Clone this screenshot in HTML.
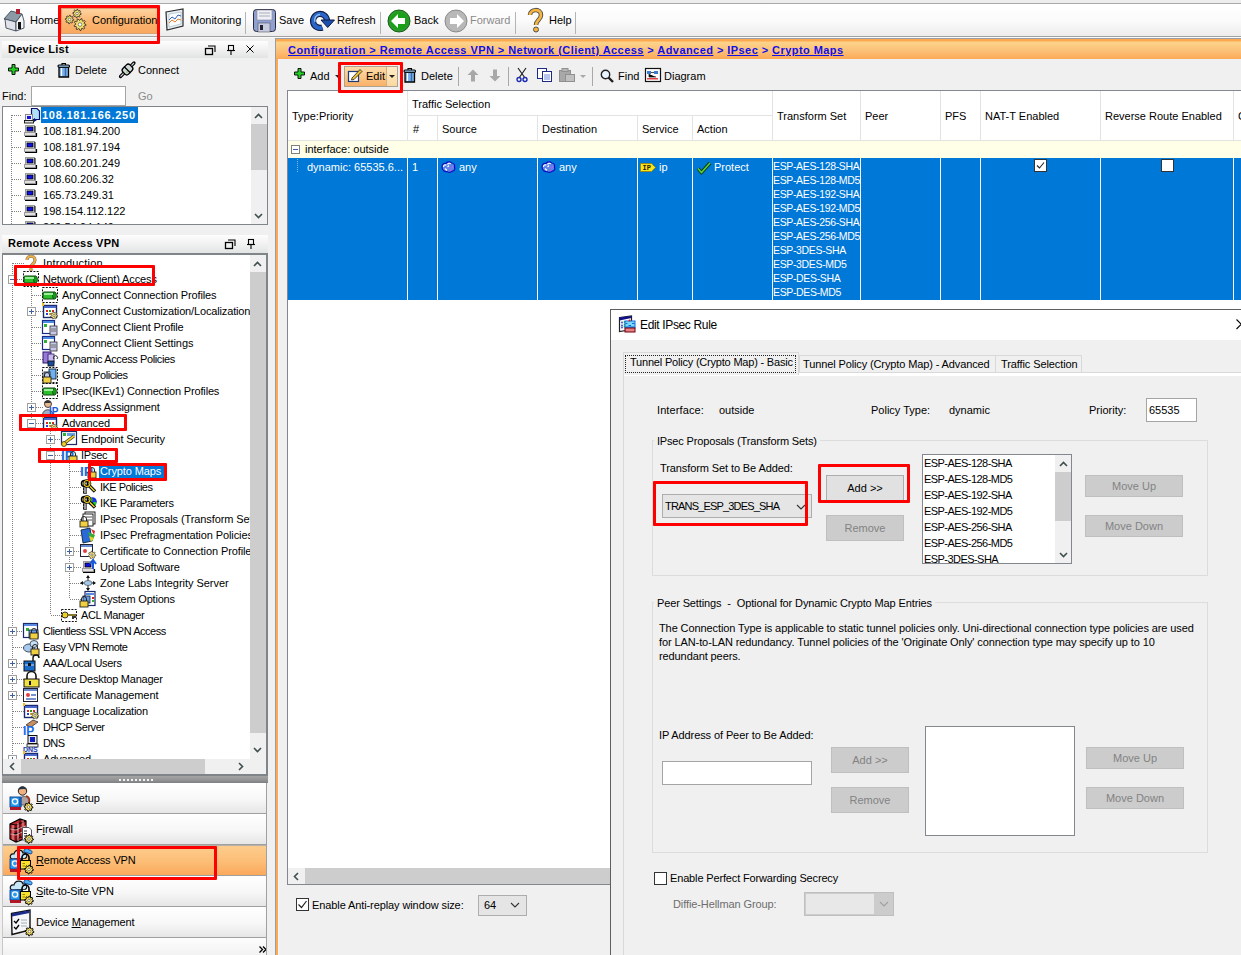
<!DOCTYPE html>
<html><head><meta charset="utf-8">
<style>
*{box-sizing:border-box}
html,body{margin:0;padding:0}
body{width:1241px;height:955px;overflow:hidden;position:relative;background:#f0f0f0;font-family:"Liberation Sans",sans-serif;font-size:11px;color:#000}
.a{position:absolute}
.t{position:absolute;white-space:nowrap;line-height:13px}
.red{position:absolute;border:3px solid #f00;border-radius:1px;z-index:50}
.sep{position:absolute;width:1px;background:#a8a8a8}
.btn{position:absolute;background:#cccccc;border:1px solid #bcbcbc;color:#838383;text-align:center;white-space:nowrap}
.navb{position:absolute;left:3px;width:264px;height:31px;background:linear-gradient(#fefefe,#f6f6f6 60%,#e9e9e9);border-bottom:1px solid #a0a0a0}
.tree{position:absolute;white-space:nowrap;line-height:16px;height:16px}
.dotv{position:absolute;width:1px;background:repeating-linear-gradient(#808080 0 1px,transparent 1px 2px)}
.doth{position:absolute;height:1px;background:repeating-linear-gradient(90deg,#808080 0 1px,transparent 1px 2px)}
.exp{position:absolute;width:9px;height:9px;border:1px solid #a0a0a0;background:#fff}
.exp:before{content:"";position:absolute;left:1px;top:3px;width:5px;height:1px;background:#4060a0}
.exp.p:after{content:"";position:absolute;left:3px;top:1px;width:1px;height:5px;background:#4060a0}
svg{position:absolute;overflow:visible}
</style></head><body>
<div class="a" style="left:0px;top:0px;width:1241px;height:3px;background:#ededed"></div>
<div class="a" style="left:0px;top:3px;width:1241px;height:1px;background:#a9a9a9"></div>
<div class="a" style="left:0px;top:4px;width:1241px;height:32px;background:linear-gradient(#ffffff,#fbfbfb 50%,#ececec)"></div>
<div class="a" style="left:0px;top:36px;width:1241px;height:1px;background:#a0a0a0"></div>
<div class="a" style="left:0px;top:37px;width:1241px;height:1px;background:#fafafa"></div>
<div class="a" style="left:61px;top:8px;width:97px;height:26px;background:linear-gradient(#fdd3a0,#fbb46f 55%,#f9a860);border:1px solid #d9a070"></div>
<div class="t" style="left:30px;top:14px;color:#000">Home</div>
<div class="t" style="left:92px;top:14px;color:#000">Configuration</div>
<div class="t" style="left:190px;top:14px;color:#000">Monitoring</div>
<div class="t" style="left:279px;top:14px;color:#000">Save</div>
<div class="t" style="left:337px;top:14px;color:#000">Refresh</div>
<div class="t" style="left:414px;top:14px;color:#000">Back</div>
<div class="t" style="left:470px;top:14px;color:#8a8a8a">Forward</div>
<div class="t" style="left:549px;top:14px;color:#000">Help</div>
<div class="a" style="left:245px;top:12px;width:1px;height:22px;background:#b4b4b4"></div>
<div class="a" style="left:380px;top:12px;width:1px;height:22px;background:#b4b4b4"></div>
<div class="a" style="left:515px;top:12px;width:1px;height:22px;background:#b4b4b4"></div>
<div class="a" style="left:575px;top:12px;width:1px;height:22px;background:#b4b4b4"></div>
<svg style="left:2px;top:9px;" width="23" height="23" viewBox="0 0 23 23"><polygon points="2,10 9,2 20,5 14,13" fill="#8c9aa6" stroke="#3c4a58" stroke-width="0.9"/><polygon points="3,10 14,13 14,22 4,19" fill="#e2e2ea" stroke="#3c4a58" stroke-width="0.9"/><polygon points="14,13 20,5 22,12 22,19 14,22" fill="#f4f4f4" stroke="#3c4a58" stroke-width="0.9"/><rect x="16" y="13" width="3" height="7" fill="#111"/><rect x="14" y="0" width="4" height="5" fill="#b02030"/></svg>
<svg style="left:64px;top:8px;" width="25" height="25" viewBox="0 0 25 25"><polygon points="17.20,5.50 17.12,6.32 15.79,6.66 15.51,7.18 15.97,8.47 15.33,8.99 14.16,8.29 13.59,8.47 13.00,9.70 12.18,9.62 11.84,8.29 11.32,8.01 10.03,8.47 9.51,7.83 10.21,6.66 10.03,6.09 8.80,5.50 8.88,4.68 10.21,4.34 10.49,3.82 10.03,2.53 10.67,2.01 11.84,2.71 12.41,2.53 13.00,1.30 13.82,1.38 14.16,2.71 14.68,2.99 15.97,2.53 16.49,3.17 15.79,4.34 15.97,4.91" fill="#f4e070" stroke="#222" stroke-width="0.8"/><circle cx="13" cy="5.5" r="1.26" fill="#fff" stroke="#444" stroke-width="0.6"/><polygon points="9.70,11.50 9.62,12.32 8.29,12.66 8.01,13.18 8.47,14.47 7.83,14.99 6.66,14.29 6.09,14.47 5.50,15.70 4.68,15.62 4.34,14.29 3.82,14.01 2.53,14.47 2.01,13.83 2.71,12.66 2.53,12.09 1.30,11.50 1.38,10.68 2.71,10.34 2.99,9.82 2.53,8.53 3.17,8.01 4.34,8.71 4.91,8.53 5.50,7.30 6.32,7.38 6.66,8.71 7.18,8.99 8.47,8.53 8.99,9.17 8.29,10.34 8.47,10.91" fill="#f4e070" stroke="#222" stroke-width="0.8"/><circle cx="5.5" cy="11.5" r="1.26" fill="#fff" stroke="#444" stroke-width="0.6"/><polygon points="22.00,16.50 21.91,17.54 20.06,17.98 19.74,18.66 20.60,20.36 19.86,21.10 18.16,20.24 17.48,20.56 17.04,22.41 16.00,22.50 15.25,20.75 14.52,20.56 13.00,21.70 12.14,21.10 12.69,19.28 12.26,18.66 10.36,18.55 10.09,17.54 11.68,16.50 11.75,15.75 10.36,14.45 10.80,13.50 12.69,13.72 13.22,13.19 13.00,11.30 13.95,10.86 15.25,12.25 16.00,12.18 17.04,10.59 18.05,10.86 18.16,12.76 18.78,13.19 20.60,12.64 21.20,13.50 20.06,15.02 20.25,15.75" fill="#f4e070" stroke="#222" stroke-width="0.8"/><circle cx="16" cy="16.5" r="1.80" fill="#fff" stroke="#444" stroke-width="0.6"/></svg>
<svg style="left:165px;top:8px;" width="21" height="24" viewBox="0 0 21 24"><polygon points="1,4 18,1 18,18 2,22" fill="#e8eef5" stroke="#2a2a2a" stroke-width="1.2"/><polygon points="4,6 16,4 16,16 4,19" fill="#fafcff" stroke="#8aa" stroke-width="0.5"/><polyline points="4,12 7,9 10,11 13,7 16,8" fill="none" stroke="#3060c0" stroke-width="1"/><polyline points="4,15 7,12 10,14 13,11 16,12" fill="none" stroke="#f08020" stroke-width="1"/></svg>
<svg style="left:253px;top:9px;" width="23" height="23" viewBox="0 0 23 23"><rect x="0.5" y="0.5" width="22" height="22" rx="3" fill="#8f9fcf" stroke="#2a2a3a" stroke-width="1"/><rect x="4" y="1" width="15" height="10" fill="#eef0f6" stroke="#889" stroke-width="0.6"/><line x1="6" y1="4" x2="17" y2="4" stroke="#99a" stroke-width="0.8"/><line x1="6" y1="7" x2="17" y2="7" stroke="#99a" stroke-width="0.8"/><rect x="5" y="14" width="12" height="9" fill="#c8cce0" stroke="#556" stroke-width="0.6"/><rect x="7" y="16" width="3" height="5" fill="#223"/></svg>
<svg style="left:311px;top:9px;" width="24" height="23" viewBox="0 0 24 23"><path d="M11.4,18.5 A7,7 0 1 1 16,11.4" fill="none" stroke="#101a40" stroke-width="6.2"/><path d="M11.4,18.5 A7,7 0 1 1 16,11.4" fill="none" stroke="#2a66c8" stroke-width="4"/><path d="M4,13 A5.5,5.5 0 0 1 9,5.5" fill="none" stroke="#8ac0f0" stroke-width="1.5"/><polygon points="10,11 23.5,11 16.7,18.5" fill="#1a50b0" stroke="#101a40" stroke-width="1"/></svg>
<svg style="left:387px;top:9px;" width="24" height="24" viewBox="0 0 24 24"><circle cx="12" cy="12" r="11" fill="#2a9a2a" stroke="#1a5e1a" stroke-width="1"/><circle cx="12" cy="12" r="8.5" fill="#18a018"/><polygon points="4,12 11,5 11,9 18,9 18,15 11,15 11,19" fill="#fff"/></svg>
<svg style="left:444px;top:9px;" width="24" height="24" viewBox="0 0 24 24"><circle cx="12" cy="12" r="11" fill="#b8b8b8" stroke="#8a8a8a" stroke-width="1"/><polygon points="20,12 13,5 13,9 6,9 6,15 13,15 13,19" fill="#fff"/></svg>
<svg style="left:527px;top:8px;" width="17" height="25" viewBox="0 0 17 25"><path d="M3,7 C3,1 14,0 14,7 C14,12 9,12 9,17" fill="none" stroke="#444" stroke-width="4.5"/><path d="M3,7 C3,1 14,0 14,7 C14,12 9,12 9,17" fill="none" stroke="#f5b540" stroke-width="2.8"/><circle cx="9" cy="21.5" r="2.5" fill="#f5b540" stroke="#444" stroke-width="0.9"/></svg>
<div class="red" style="left:58px;top:5px;width:102px;height:39px"></div>
<div class="a" style="left:2px;top:41px;width:266px;height:17px;background:linear-gradient(#fdfdfd,#f4f4f4 40%,#e2e4e4)"></div>
<div class="t" style="left:8px;top:43px;font-weight:bold;letter-spacing:0.25px">Device List</div>
<svg style="left:205px;top:45px;" width="11" height="10" viewBox="0 0 11 10"><rect x="0.5" y="3.5" width="7" height="6" fill="none" stroke="#000" stroke-width="1.3"/><path d="M3,1 H10 V7" fill="none" stroke="#000" stroke-width="1.1"/></svg>
<svg style="left:227px;top:45px;" width="8" height="10" viewBox="0 0 8 10"><rect x="1.5" y="0.5" width="5" height="5" fill="none" stroke="#000" stroke-width="1.1"/><line x1="0" y1="5.5" x2="8" y2="5.5" stroke="#000" stroke-width="1.1"/><line x1="4" y1="5" x2="4" y2="10" stroke="#000" stroke-width="1.1"/></svg>
<svg style="left:246px;top:45px;" width="8" height="8" viewBox="0 0 8 8"><path d="M0.5,0.5 L7.5,7.5 M7.5,0.5 L0.5,7.5" stroke="#000" stroke-width="1"/></svg>
<svg style="left:8px;top:64px;" width="11" height="11" viewBox="0 0 11 11"><path d="M4,0.5 h3 v3.5 h3.5 v3 h-3.5 v3.5 h-3 v-3.5 h-3.5 v-3 h3.5z" fill="#22cc22" stroke="#111" stroke-width="1"/></svg>
<div class="t" style="left:25px;top:64px;">Add</div>
<svg style="left:57px;top:62px;" width="13" height="15" viewBox="0 0 13 15"><path d="M2,5 V15 H11.5 V5z" fill="#7ab0e8" stroke="#000" stroke-width="1.3"/><path d="M4.5,6 V14" stroke="#fff" stroke-width="1.2"/><path d="M8.5,6 V14" stroke="#3a6ab0" stroke-width="1.4"/><rect x="1" y="3" width="11.5" height="2.2" rx="1" fill="#9ac8f0" stroke="#000" stroke-width="1.1"/><path d="M5,3 V1.5 H8.5 V3" fill="none" stroke="#000" stroke-width="1.1"/></svg>
<div class="t" style="left:75px;top:64px;">Delete</div>
<svg style="left:119px;top:62px;" width="17" height="17" viewBox="0 0 17 17"><path d="M1.5,14.5 L5,11 M12,4 L15,1" stroke="#000" stroke-width="3.2" stroke-linecap="round"/><path d="M1.5,14.5 L5,11 M12,4 L15,1" stroke="#c8d0d0" stroke-width="1.1"/><rect x="3.5" y="3.5" width="10" height="8" rx="2.5" transform="rotate(-45 8.5 7.5)" fill="#d0d8d8" stroke="#000" stroke-width="1.3"/><path d="M5,4.5 L11.5,11" stroke="#000" stroke-width="1.2"/><circle cx="8" cy="10" r="0.8" fill="#60c040"/></svg>
<div class="t" style="left:138px;top:64px;">Connect</div>
<div class="t" style="left:2px;top:90px;">Find:</div>
<div class="a" style="left:31px;top:86px;width:95px;height:20px;background:#fff;border:1px solid #a5a5a5"></div>
<div class="t" style="left:138px;top:90px;color:#8a8a8a">Go</div>
<div class="a" style="left:2px;top:106px;width:266px;height:119px;background:#fff;border:1px solid #7f8588"></div>
<div class="a" style="left:3px;top:107px;width:248px;height:117px;overflow:hidden">
<div class="dotv" style="left:8px;top:8px;height:109px"></div>
<div class="doth" style="left:9px;top:8px;width:10px"></div>
<div class="a" style="left:38px;top:0px;width:97px;height:16px;background:#0078d7"></div>
<svg style="left:19px;top:0px;" width="18" height="17" viewBox="0 0 18 17"><path d="M9.5,1.5 H15 L17.5,4 V12.5 H9.5z" fill="#b0e0f8" stroke="#10106a" stroke-width="1.2"/><path d="M12,11 L15,13 L12,15z" fill="#10106a"/><rect x="3.5" y="7.5" width="7" height="6" fill="#f0f0f0" stroke="#888" stroke-width="1"/><rect x="5" y="9" width="4" height="3" fill="#1010e0"/><rect x="2.5" y="13.5" width="9" height="2.5" fill="#e0e0e0" stroke="#111" stroke-width="0.9"/></svg>
<div class="t" style="left:39px;top:2px;color:#fff;font-weight:bold;letter-spacing:0.75px">108.181.166.250</div>
<div class="doth" style="left:9px;top:24px;width:10px"></div>
<svg style="left:19px;top:16px;" width="16" height="16" viewBox="0 0 16 16"><rect x="3.5" y="2.5" width="9" height="7" fill="#f0f0f0" stroke="#9a9a9a" stroke-width="1"/><path d="M13,3 V10" stroke="#000" stroke-width="1"/><rect x="5" y="4" width="6" height="4" fill="#1010e0" stroke="#000" stroke-width="0.8"/><rect x="2.5" y="9.5" width="11" height="3" fill="#e0e0e0" stroke="#9a9a9a" stroke-width="1"/><path d="M3,13.5 H14.5 V10" stroke="#000" stroke-width="1.2" fill="none"/></svg>
<div class="t" style="left:40px;top:18px;letter-spacing:0.05px">108.181.94.200</div>
<div class="doth" style="left:9px;top:40px;width:10px"></div>
<svg style="left:19px;top:32px;" width="16" height="16" viewBox="0 0 16 16"><rect x="3.5" y="2.5" width="9" height="7" fill="#f0f0f0" stroke="#9a9a9a" stroke-width="1"/><path d="M13,3 V10" stroke="#000" stroke-width="1"/><rect x="5" y="4" width="6" height="4" fill="#1010e0" stroke="#000" stroke-width="0.8"/><rect x="2.5" y="9.5" width="11" height="3" fill="#e0e0e0" stroke="#9a9a9a" stroke-width="1"/><path d="M3,13.5 H14.5 V10" stroke="#000" stroke-width="1.2" fill="none"/></svg>
<div class="t" style="left:40px;top:34px;letter-spacing:0.05px">108.181.97.194</div>
<div class="doth" style="left:9px;top:56px;width:10px"></div>
<svg style="left:19px;top:48px;" width="16" height="16" viewBox="0 0 16 16"><rect x="3.5" y="2.5" width="9" height="7" fill="#f0f0f0" stroke="#9a9a9a" stroke-width="1"/><path d="M13,3 V10" stroke="#000" stroke-width="1"/><rect x="5" y="4" width="6" height="4" fill="#1010e0" stroke="#000" stroke-width="0.8"/><rect x="2.5" y="9.5" width="11" height="3" fill="#e0e0e0" stroke="#9a9a9a" stroke-width="1"/><path d="M3,13.5 H14.5 V10" stroke="#000" stroke-width="1.2" fill="none"/></svg>
<div class="t" style="left:40px;top:50px;letter-spacing:0.05px">108.60.201.249</div>
<div class="doth" style="left:9px;top:72px;width:10px"></div>
<svg style="left:19px;top:64px;" width="16" height="16" viewBox="0 0 16 16"><rect x="3.5" y="2.5" width="9" height="7" fill="#f0f0f0" stroke="#9a9a9a" stroke-width="1"/><path d="M13,3 V10" stroke="#000" stroke-width="1"/><rect x="5" y="4" width="6" height="4" fill="#1010e0" stroke="#000" stroke-width="0.8"/><rect x="2.5" y="9.5" width="11" height="3" fill="#e0e0e0" stroke="#9a9a9a" stroke-width="1"/><path d="M3,13.5 H14.5 V10" stroke="#000" stroke-width="1.2" fill="none"/></svg>
<div class="t" style="left:40px;top:66px;letter-spacing:0.05px">108.60.206.32</div>
<div class="doth" style="left:9px;top:88px;width:10px"></div>
<svg style="left:19px;top:80px;" width="16" height="16" viewBox="0 0 16 16"><rect x="3.5" y="2.5" width="9" height="7" fill="#f0f0f0" stroke="#9a9a9a" stroke-width="1"/><path d="M13,3 V10" stroke="#000" stroke-width="1"/><rect x="5" y="4" width="6" height="4" fill="#1010e0" stroke="#000" stroke-width="0.8"/><rect x="2.5" y="9.5" width="11" height="3" fill="#e0e0e0" stroke="#9a9a9a" stroke-width="1"/><path d="M3,13.5 H14.5 V10" stroke="#000" stroke-width="1.2" fill="none"/></svg>
<div class="t" style="left:40px;top:82px;letter-spacing:0.05px">165.73.249.31</div>
<div class="doth" style="left:9px;top:104px;width:10px"></div>
<svg style="left:19px;top:96px;" width="16" height="16" viewBox="0 0 16 16"><rect x="3.5" y="2.5" width="9" height="7" fill="#f0f0f0" stroke="#9a9a9a" stroke-width="1"/><path d="M13,3 V10" stroke="#000" stroke-width="1"/><rect x="5" y="4" width="6" height="4" fill="#1010e0" stroke="#000" stroke-width="0.8"/><rect x="2.5" y="9.5" width="11" height="3" fill="#e0e0e0" stroke="#9a9a9a" stroke-width="1"/><path d="M3,13.5 H14.5 V10" stroke="#000" stroke-width="1.2" fill="none"/></svg>
<div class="t" style="left:40px;top:98px;letter-spacing:0.05px">198.154.112.122</div>
<div class="doth" style="left:9px;top:120px;width:10px"></div>
<svg style="left:19px;top:112px;" width="16" height="16" viewBox="0 0 16 16"><rect x="3.5" y="2.5" width="9" height="7" fill="#f0f0f0" stroke="#9a9a9a" stroke-width="1"/><path d="M13,3 V10" stroke="#000" stroke-width="1"/><rect x="5" y="4" width="6" height="4" fill="#1010e0" stroke="#000" stroke-width="0.8"/><rect x="2.5" y="9.5" width="11" height="3" fill="#e0e0e0" stroke="#9a9a9a" stroke-width="1"/><path d="M3,13.5 H14.5 V10" stroke="#000" stroke-width="1.2" fill="none"/></svg>
<div class="t" style="left:40px;top:114px;letter-spacing:0.05px">209.54.94.149</div>
</div>
<div class="a" style="left:251px;top:107px;width:16px;height:117px;background:#f0f0f0"></div>
<div class="a" style="left:251px;top:124px;width:16px;height:46px;background:#cdcdcd"></div>
<svg style="left:254px;top:113px;" width="9" height="6" viewBox="0 0 9 6"><path d="M1,5 L4.5,1.5 L8,5" fill="none" stroke="#3f4f4f" stroke-width="1.6"/></svg>
<svg style="left:254px;top:213px;" width="9" height="6" viewBox="0 0 9 6"><path d="M1,1 L4.5,4.5 L8,1" fill="none" stroke="#3f4f4f" stroke-width="1.6"/></svg>
<div class="a" style="left:2px;top:235px;width:266px;height:18px;background:linear-gradient(#fdfdfd,#f4f4f4 40%,#e2e4e4)"></div>
<div class="t" style="left:8px;top:237px;font-weight:bold;letter-spacing:0.25px">Remote Access VPN</div>
<svg style="left:225px;top:239px;" width="11" height="10" viewBox="0 0 11 10"><rect x="0.5" y="3.5" width="7" height="6" fill="none" stroke="#000" stroke-width="1.3"/><path d="M3,1 H10 V7" fill="none" stroke="#000" stroke-width="1.1"/></svg>
<svg style="left:247px;top:239px;" width="8" height="10" viewBox="0 0 8 10"><rect x="1.5" y="0.5" width="5" height="5" fill="none" stroke="#000" stroke-width="1.1"/><line x1="0" y1="5.5" x2="8" y2="5.5" stroke="#000" stroke-width="1.1"/><line x1="4" y1="5" x2="4" y2="10" stroke="#000" stroke-width="1.1"/></svg>
<div class="a" style="left:2px;top:253px;width:266px;height:523px;background:#fff;border:1px solid #7f8588;border-top:2px solid #7f8588;border-right:2px solid #7f8588;border-bottom:2px solid #7f8588"></div>
<div class="a" style="left:3px;top:255px;width:247px;height:504px;overflow:hidden">
<div class="dotv" style="left:9px;top:8px;height:496px"></div>
<div class="dotv" style="left:28px;top:32px;height:136px"></div>
<div class="dotv" style="left:47px;top:176px;height:184px"></div>
<div class="dotv" style="left:66px;top:208px;height:136px"></div>
<div class="doth" style="left:10px;top:8px;width:11px"></div>
<svg style="left:20px;top:0px;" width="17" height="17" viewBox="0 0 17 17"><path d="M4,5 C4,0 12,0 12,5 C12,9 8,9 8,12" fill="none" stroke="#777" stroke-width="3.2"/><path d="M4,5 C4,0 12,0 12,5 C12,9 8,9 8,12" fill="none" stroke="#f0b040" stroke-width="2"/><circle cx="8" cy="14.5" r="1.6" fill="#f0b040" stroke="#777" stroke-width="0.6"/></svg>
<div class="t" style="left:40px;top:2px;letter-spacing:0.19px">Introduction</div>
<div class="doth" style="left:10px;top:24px;width:11px"></div>
<div class="exp" style="left:5px;top:20px"></div>
<svg style="left:20px;top:16px;" width="17" height="17" viewBox="0 0 17 17"><rect x="0.5" y="0.5" width="15" height="15" fill="none" stroke="#111" stroke-width="1" stroke-dasharray="2,1.3"/><rect x="1" y="5" width="12" height="7" rx="1" fill="#2cc02c" stroke="#114411" stroke-width="1"/><ellipse cx="12.5" cy="8.5" rx="2" ry="3.5" fill="#1a9a1a" stroke="#114411" stroke-width="0.8"/><rect x="2" y="6" width="9" height="2" fill="#9af09a"/></svg>
<div class="t" style="left:40px;top:18px;letter-spacing:-0.13px">Network (Client) Access</div>
<div class="doth" style="left:29px;top:40px;width:11px"></div>
<svg style="left:39px;top:32px;" width="17" height="17" viewBox="0 0 17 17"><rect x="0.5" y="0.5" width="15" height="15" fill="none" stroke="#111" stroke-width="1" stroke-dasharray="2,1.3"/><rect x="1" y="5" width="12" height="7" rx="1" fill="#2cc02c" stroke="#114411" stroke-width="1"/><ellipse cx="12.5" cy="8.5" rx="2" ry="3.5" fill="#1a9a1a" stroke="#114411" stroke-width="0.8"/><rect x="2" y="6" width="9" height="2" fill="#9af09a"/></svg>
<div class="t" style="left:59px;top:34px;letter-spacing:-0.13px">AnyConnect Connection Profiles</div>
<div class="doth" style="left:29px;top:56px;width:11px"></div>
<div class="exp p" style="left:24px;top:52px"></div>
<svg style="left:39px;top:48px;" width="17" height="17" viewBox="0 0 17 17"><rect x="1.5" y="2.5" width="13" height="12" fill="#fff" stroke="#1a2a6a" stroke-width="1.4"/><rect x="2" y="3" width="12" height="2" fill="#4a6ad0"/><rect x="4" y="7" width="2" height="2" fill="#e02020"/><rect x="7" y="7" width="2" height="2" fill="#20a020"/><rect x="10" y="7" width="2" height="2" fill="#e02020"/><rect x="4" y="10" width="2" height="2" fill="#2040e0"/><rect x="7" y="10" width="2" height="2" fill="#e0a020"/><rect x="0" y="0" width="2" height="3" fill="#f0c020"/><polygon points="15.60,12.50 15.51,13.30 14.34,13.62 14.03,14.12 14.24,15.31 13.56,15.74 12.58,15.03 12.00,15.09 11.20,16.01 10.44,15.74 10.38,14.53 9.97,14.12 8.76,14.06 8.49,13.30 9.41,12.50 9.47,11.92 8.76,10.94 9.19,10.26 10.38,10.47 10.88,10.16 11.20,8.99 12.00,8.90 12.58,9.97 13.12,10.16 14.24,9.69 14.81,10.26 14.34,11.38 14.53,11.92" fill="#f3e27a" stroke="#333" stroke-width="0.7"/><circle cx="12" cy="12.5" r="1.08" fill="#fff" stroke="#444" stroke-width="0.6"/></svg>
<div class="t" style="left:59px;top:50px;letter-spacing:-0.15px">AnyConnect Customization/Localization</div>
<div class="doth" style="left:29px;top:72px;width:11px"></div>
<svg style="left:39px;top:64px;" width="17" height="17" viewBox="0 0 17 17"><rect x="0.5" y="1.5" width="12" height="13" fill="#fff" stroke="#1a2a8a" stroke-width="1.2"/><rect x="1" y="2" width="11" height="2" fill="#4a8ae0"/><rect x="2" y="5" width="3" height="3" fill="#30b030"/><rect x="8" y="7" width="7" height="9" fill="#c8c8e8" stroke="#333" stroke-width="0.8"/><line x1="9" y1="10" x2="14" y2="10" stroke="#555" stroke-width="0.8"/><line x1="9" y1="12" x2="14" y2="12" stroke="#555" stroke-width="0.8"/></svg>
<div class="t" style="left:59px;top:66px;letter-spacing:-0.15px">AnyConnect Client Profile</div>
<div class="doth" style="left:29px;top:88px;width:11px"></div>
<svg style="left:39px;top:80px;" width="17" height="17" viewBox="0 0 17 17"><rect x="0.5" y="1.5" width="12" height="13" fill="#fff" stroke="#1a2a8a" stroke-width="1.2"/><rect x="1" y="2" width="11" height="2" fill="#4a8ae0"/><rect x="2" y="5" width="3" height="3" fill="#30b030"/><rect x="8" y="7" width="7" height="9" fill="#c8c8e8" stroke="#333" stroke-width="0.8"/><line x1="9" y1="10" x2="14" y2="10" stroke="#555" stroke-width="0.8"/><line x1="9" y1="12" x2="14" y2="12" stroke="#555" stroke-width="0.8"/></svg>
<div class="t" style="left:59px;top:82px;letter-spacing:-0.1px">AnyConnect Client Settings</div>
<div class="doth" style="left:29px;top:104px;width:11px"></div>
<svg style="left:39px;top:96px;" width="17" height="17" viewBox="0 0 17 17"><rect x="1" y="1" width="8" height="11" fill="#9a7ad8" stroke="#2a1a6a" stroke-width="1"/><rect x="6" y="3" width="6" height="9" fill="#c8b8f0" stroke="#2a1a6a" stroke-width="0.8"/><rect x="6" y="10" width="6" height="5" fill="#1a4a9a" stroke="#111" stroke-width="0.8"/><path d="M12,8 a2,2 0 1 1 3,0" fill="none" stroke="#222" stroke-width="1"/></svg>
<div class="t" style="left:59px;top:98px;letter-spacing:-0.38px">Dynamic Access Policies</div>
<div class="doth" style="left:29px;top:120px;width:11px"></div>
<svg style="left:39px;top:112px;" width="17" height="17" viewBox="0 0 17 17"><rect x="0.5" y="0.5" width="15" height="15" fill="none" stroke="#111" stroke-width="1" stroke-dasharray="2,1.3"/><rect x="7" y="2" width="7" height="10" fill="#70b0f0" stroke="#123" stroke-width="0.9"/><rect x="2" y="5" width="6" height="8" fill="#c0d0f0" stroke="#123" stroke-width="0.9"/><path d="M2.5,10 v-2 a2.5,2.5 0 0 1 5,0 v2" fill="none" stroke="#222" stroke-width="1"/><rect x="1" y="10" width="8" height="6" fill="#f0d040" stroke="#222" stroke-width="0.9"/></svg>
<div class="t" style="left:59px;top:114px;letter-spacing:-0.42px">Group Policies</div>
<div class="doth" style="left:29px;top:136px;width:11px"></div>
<svg style="left:39px;top:128px;" width="17" height="17" viewBox="0 0 17 17"><rect x="0.5" y="0.5" width="15" height="15" fill="none" stroke="#111" stroke-width="1" stroke-dasharray="2,1.3"/><rect x="1" y="5" width="12" height="7" rx="1" fill="#2cc02c" stroke="#114411" stroke-width="1"/><ellipse cx="12.5" cy="8.5" rx="2" ry="3.5" fill="#1a9a1a" stroke="#114411" stroke-width="0.8"/><rect x="2" y="6" width="9" height="2" fill="#9af09a"/></svg>
<div class="t" style="left:59px;top:130px;letter-spacing:-0.17px">IPsec(IKEv1) Connection Profiles</div>
<div class="doth" style="left:29px;top:152px;width:11px"></div>
<div class="exp p" style="left:24px;top:148px"></div>
<svg style="left:39px;top:144px;" width="17" height="17" viewBox="0 0 17 17"><circle cx="6" cy="5" r="3.5" fill="#e8b890" stroke="#333" stroke-width="0.9"/><path d="M5,1.5 a3.5,3 0 0 1 4,2.5 h-7 a3.5,3 0 0 1 3,-2.5z" fill="#333"/><path d="M0.5,16 C0.5,9 11,9 11,16z" fill="#9ab0c8" stroke="#333" stroke-width="0.8"/><text x="7" y="16" font-family="Liberation Sans" font-weight="bold" font-size="10" fill="#1a5ad8">IP</text></svg>
<div class="t" style="left:59px;top:146px;letter-spacing:-0.15px">Address Assignment</div>
<div class="doth" style="left:29px;top:168px;width:11px"></div>
<div class="exp" style="left:24px;top:164px"></div>
<svg style="left:39px;top:160px;" width="17" height="17" viewBox="0 0 17 17"><rect x="1.5" y="2.5" width="13" height="12" fill="#fff" stroke="#1a2a6a" stroke-width="1.4"/><rect x="2" y="3" width="12" height="2" fill="#4a6ad0"/><rect x="4" y="7" width="2" height="2" fill="#e02020"/><rect x="7" y="7" width="2" height="2" fill="#20a020"/><rect x="10" y="7" width="2" height="2" fill="#e02020"/><rect x="4" y="10" width="2" height="2" fill="#2040e0"/><rect x="7" y="10" width="2" height="2" fill="#e0a020"/><rect x="0" y="0" width="2" height="3" fill="#f0c020"/><polygon points="15.60,12.50 15.51,13.30 14.34,13.62 14.03,14.12 14.24,15.31 13.56,15.74 12.58,15.03 12.00,15.09 11.20,16.01 10.44,15.74 10.38,14.53 9.97,14.12 8.76,14.06 8.49,13.30 9.41,12.50 9.47,11.92 8.76,10.94 9.19,10.26 10.38,10.47 10.88,10.16 11.20,8.99 12.00,8.90 12.58,9.97 13.12,10.16 14.24,9.69 14.81,10.26 14.34,11.38 14.53,11.92" fill="#f3e27a" stroke="#333" stroke-width="0.7"/><circle cx="12" cy="12.5" r="1.08" fill="#fff" stroke="#444" stroke-width="0.6"/></svg>
<div class="t" style="left:59px;top:162px;letter-spacing:-0.13px">Advanced</div>
<div class="doth" style="left:48px;top:184px;width:11px"></div>
<div class="exp p" style="left:43px;top:180px"></div>
<svg style="left:58px;top:176px;" width="17" height="17" viewBox="0 0 17 17"><rect x="0.5" y="0.5" width="15" height="13" fill="#fff" stroke="#1a2a6a" stroke-width="1.2"/><rect x="2" y="2" width="3" height="3" fill="#30b030"/><rect x="6" y="2" width="8" height="3" fill="#60a0e0"/><path d="M1,14 L13,5" stroke="#333" stroke-width="3"/><path d="M1,14 L13,5" stroke="#f0d020" stroke-width="1.6"/><circle cx="3" cy="13" r="2.5" fill="#f0d020" stroke="#333" stroke-width="0.8"/></svg>
<div class="t" style="left:78px;top:178px;letter-spacing:-0.14px">Endpoint Security</div>
<div class="doth" style="left:48px;top:200px;width:11px"></div>
<div class="exp" style="left:43px;top:196px"></div>
<svg style="left:58px;top:192px;" width="17" height="17" viewBox="0 0 17 17"><text x="0" y="12.5" font-family="Liberation Sans" font-weight="bold" font-size="13.5" fill="#1a6ad8" textLength="13" lengthAdjust="spacingAndGlyphs">IP</text><path d="M9.5,9 v-2 a2.5,2.5 0 0 1 5,0 v2" fill="none" stroke="#222" stroke-width="1"/><rect x="8" y="9" width="8" height="6" fill="#f0d040" stroke="#222" stroke-width="0.9"/></svg>
<div class="t" style="left:78px;top:194px;letter-spacing:-0.25px">IPsec</div>
<div class="doth" style="left:67px;top:216px;width:11px"></div>
<svg style="left:77px;top:208px;" width="17" height="17" viewBox="0 0 17 17"><text x="0" y="12.5" font-family="Liberation Sans" font-weight="bold" font-size="13.5" fill="#1a6ad8" textLength="13" lengthAdjust="spacingAndGlyphs">IP</text><path d="M9.5,9 v-2 a2.5,2.5 0 0 1 5,0 v2" fill="none" stroke="#222" stroke-width="1"/><rect x="8" y="9" width="8" height="6" fill="#f0d040" stroke="#222" stroke-width="0.9"/></svg>
<div class="a" style="left:96px;top:208px;width:66px;height:16px;background:#0078d7"></div>
<div class="t" style="left:97px;top:210px;color:#fff;letter-spacing:-0.1px">Crypto Maps</div>
<div class="doth" style="left:67px;top:232px;width:11px"></div>
<svg style="left:77px;top:224px;" width="17" height="17" viewBox="0 0 17 17"><path d="M5,7 V15" stroke="#000" stroke-width="3.2"/><path d="M5,7 V14.5" stroke="#fff" stroke-width="1.2"/><path d="M3,10 H4 M3,13 H4" stroke="#000" stroke-width="1.4"/><circle cx="4.5" cy="4.5" r="3" fill="#fff" stroke="#000" stroke-width="1.5"/><path d="M9,6.5 L15,12.5" stroke="#000" stroke-width="3.4"/><path d="M9,6.5 L14.5,12" stroke="#f0e020" stroke-width="1.4"/><circle cx="7" cy="4.5" r="3" fill="none" stroke="#000" stroke-width="2.6"/><circle cx="7" cy="4.5" r="3" fill="none" stroke="#f0d020" stroke-width="1.2"/></svg>
<div class="t" style="left:97px;top:226px;letter-spacing:-0.52px">IKE Policies</div>
<div class="doth" style="left:67px;top:248px;width:11px"></div>
<svg style="left:77px;top:240px;" width="17" height="17" viewBox="0 0 17 17"><circle cx="12.5" cy="6.5" r="4.3" fill="#1a30e0"/><path d="M9.5,3 C12,2 13.5,4.5 12,6.5 C10.5,8 9,6 9.5,3z M13,7.5 C15,5.5 17,7.5 16,9.5 C15,11 12.5,10 13,7.5z" fill="#20d020"/><path d="M5,7 V15" stroke="#000" stroke-width="3.2"/><path d="M5,7 V14.5" stroke="#fff" stroke-width="1.2"/><path d="M3,10 H4 M3,13 H4" stroke="#000" stroke-width="1.4"/><circle cx="4.5" cy="4.5" r="3" fill="#fff" stroke="#000" stroke-width="1.5"/><path d="M9,6.5 L15,12.5" stroke="#000" stroke-width="3.4"/><path d="M9,6.5 L14.5,12" stroke="#f0e020" stroke-width="1.4"/><circle cx="7" cy="4.5" r="3" fill="none" stroke="#000" stroke-width="2.6"/><circle cx="7" cy="4.5" r="3" fill="none" stroke="#f0d020" stroke-width="1.2"/></svg>
<div class="t" style="left:97px;top:242px;letter-spacing:-0.28px">IKE Parameters</div>
<div class="doth" style="left:67px;top:264px;width:11px"></div>
<svg style="left:77px;top:256px;" width="17" height="17" viewBox="0 0 17 17"><rect x="5" y="1" width="10" height="12" fill="#fff" stroke="#222" stroke-width="1"/><rect x="3" y="3" width="10" height="12" fill="#fff" stroke="#222" stroke-width="1"/><line x1="6" y1="6" x2="12" y2="6" stroke="#555"/><line x1="6" y1="9" x2="12" y2="9" stroke="#555"/><path d="M1.5,10 v-2 a2.5,2.5 0 0 1 5,0 v2" fill="none" stroke="#222" stroke-width="1"/><rect x="0" y="10" width="8" height="6" fill="#f0d040" stroke="#222" stroke-width="0.9"/></svg>
<div class="t" style="left:97px;top:258px;letter-spacing:-0.1px">IPsec Proposals (Transform Sets)</div>
<div class="doth" style="left:67px;top:280px;width:11px"></div>
<svg style="left:77px;top:272px;" width="17" height="17" viewBox="0 0 17 17"><path d="M1,3 L10,1 L12,14 L3,16z" fill="#2a6ad8" stroke="#123" stroke-width="0.9"/><path d="M8,5 L15,8 L12,15z" fill="#30b030"/><path d="M11,2 L15,4 L14,8z" fill="#e02020"/><path d="M9,9 L14,11 L11,15z" fill="#f0d020"/></svg>
<div class="t" style="left:97px;top:274px;letter-spacing:-0.1px">IPsec Prefragmentation Policies</div>
<div class="doth" style="left:67px;top:296px;width:11px"></div>
<div class="exp p" style="left:62px;top:292px"></div>
<svg style="left:77px;top:288px;" width="17" height="17" viewBox="0 0 17 17"><rect x="0.5" y="1.5" width="12" height="12" fill="#fff" stroke="#223" stroke-width="1"/><rect x="1" y="2" width="11" height="2" fill="#6a8ad0"/><circle cx="5" cy="8" r="2" fill="#e04040"/><polygon points="15.80,12.00 15.70,12.85 14.47,13.19 14.14,13.71 14.37,14.97 13.65,15.42 12.61,14.67 12.00,14.74 11.15,15.70 10.35,15.42 10.29,14.14 9.86,13.71 8.58,13.65 8.30,12.85 9.26,12.00 9.33,11.39 8.58,10.35 9.03,9.63 10.29,9.86 10.81,9.53 11.15,8.30 12.00,8.20 12.61,9.33 13.19,9.53 14.37,9.03 14.97,9.63 14.47,10.81 14.67,11.39" fill="#f3e27a" stroke="#333" stroke-width="0.7"/><circle cx="12" cy="12" r="1.14" fill="#fff" stroke="#444" stroke-width="0.6"/></svg>
<div class="t" style="left:97px;top:290px;letter-spacing:-0.1px">Certificate to Connection Profile Maps</div>
<div class="doth" style="left:67px;top:312px;width:11px"></div>
<div class="exp p" style="left:62px;top:308px"></div>
<svg style="left:77px;top:304px;" width="17" height="17" viewBox="0 0 17 17"><rect x="3.5" y="2.5" width="9" height="7" fill="#f0f0f0" stroke="#9a9a9a" stroke-width="1"/><path d="M13,3 V10" stroke="#000" stroke-width="1"/><rect x="5" y="4" width="6" height="4" fill="#1010e0" stroke="#000" stroke-width="0.8"/><rect x="2.5" y="9.5" width="11" height="3" fill="#e0e0e0" stroke="#9a9a9a" stroke-width="1"/><path d="M3,13.5 H14.5 V10" stroke="#000" stroke-width="1.2" fill="none"/><path d="M13,10 V2 M10,5 L13,1 L16,5" stroke="#1a5ad8" stroke-width="2" fill="none"/></svg>
<div class="t" style="left:97px;top:306px;letter-spacing:-0.1px">Upload Software</div>
<div class="doth" style="left:67px;top:328px;width:11px"></div>
<svg style="left:77px;top:320px;" width="17" height="17" viewBox="0 0 17 17"><path d="M1,8 H15 M8,1 V15" stroke="#111" stroke-width="1"/><polygon points="0,8 3,6 3,10" fill="#111"/><polygon points="16,8 13,6 13,10" fill="#111"/><polygon points="8,0 6,3 10,3" fill="#111"/><polygon points="8,16 6,13 10,13" fill="#111"/><ellipse cx="8" cy="8" rx="4" ry="2.5" fill="#a8c8e8" stroke="#456" stroke-width="0.7"/></svg>
<div class="t" style="left:97px;top:322px;letter-spacing:-0.04px">Zone Labs Integrity Server</div>
<div class="doth" style="left:67px;top:344px;width:11px"></div>
<svg style="left:77px;top:336px;" width="17" height="17" viewBox="0 0 17 17"><rect x="5" y="0.5" width="10" height="14" fill="#fff" stroke="#1a2a6a" stroke-width="1.2"/><rect x="6" y="2" width="8" height="2" fill="#5a8ae0"/><rect x="12" y="6" width="2" height="2" fill="#e02020"/><rect x="12" y="9" width="2" height="2" fill="#30b030"/><rect x="3" y="5" width="7" height="7" fill="#6a9ae0" stroke="#123" stroke-width="0.8"/><path d="M1.5,10 v-2 a2.5,2.5 0 0 1 5,0 v2" fill="none" stroke="#222" stroke-width="1"/><rect x="0" y="10" width="8" height="6" fill="#f0d040" stroke="#222" stroke-width="0.9"/></svg>
<div class="t" style="left:97px;top:338px;letter-spacing:-0.2px">System Options</div>
<div class="doth" style="left:48px;top:360px;width:11px"></div>
<svg style="left:58px;top:352px;" width="17" height="17" viewBox="0 0 17 17"><rect x="0.5" y="2.5" width="15" height="12" fill="none" stroke="#111" stroke-width="1" stroke-dasharray="2,1.3"/><circle cx="4" cy="8" r="3" fill="#f0d020" stroke="#333" stroke-width="1"/><path d="M7,8 H15 M12,8 V12 M14,8 V11" stroke="#333" stroke-width="2"/><path d="M7,8 H15" stroke="#f0d020" stroke-width="0.9"/></svg>
<div class="t" style="left:78px;top:354px;letter-spacing:-0.37px">ACL Manager</div>
<div class="doth" style="left:10px;top:376px;width:11px"></div>
<div class="exp p" style="left:5px;top:372px"></div>
<svg style="left:20px;top:368px;" width="17" height="17" viewBox="0 0 17 17"><rect x="0.5" y="0.5" width="14" height="14" fill="#fff" stroke="#1a2a6a" stroke-width="1.2"/><rect x="1" y="1" width="13" height="2" fill="#5a8ae0"/><rect x="3" y="5" width="3" height="3" fill="#30b030"/><rect x="6" y="7" width="9" height="8" fill="#6a9ae0" stroke="#123" stroke-width="0.8"/><path d="M8.5,10 v-2 a2.5,2.5 0 0 1 5,0 v2" fill="none" stroke="#222" stroke-width="1"/><rect x="7" y="10" width="8" height="6" fill="#f0d040" stroke="#222" stroke-width="0.9"/></svg>
<div class="t" style="left:40px;top:370px;letter-spacing:-0.48px">Clientless SSL VPN Access</div>
<div class="doth" style="left:10px;top:392px;width:11px"></div>
<svg style="left:20px;top:384px;" width="17" height="17" viewBox="0 0 17 17"><ellipse cx="6" cy="9" rx="5.5" ry="4" fill="#a8c8f0" stroke="#345" stroke-width="0.9"/><ellipse cx="11" cy="5" rx="4" ry="3.5" fill="#c8e0f8" stroke="#345" stroke-width="0.9"/><path d="M9.5,10 v-2 a2.5,2.5 0 0 1 5,0 v2" fill="none" stroke="#222" stroke-width="1"/><rect x="8" y="10" width="8" height="6" fill="#f0d040" stroke="#222" stroke-width="0.9"/></svg>
<div class="t" style="left:40px;top:386px;letter-spacing:-0.48px">Easy VPN Remote</div>
<div class="doth" style="left:10px;top:408px;width:11px"></div>
<div class="exp p" style="left:5px;top:404px"></div>
<svg style="left:20px;top:400px;" width="17" height="17" viewBox="0 0 17 17"><path d="M10,6 V3 a3,3 0 0 1 6,0" fill="none" stroke="#111" stroke-width="1.4"/><rect x="1" y="6" width="11" height="10" fill="#1a6ac8" stroke="#111" stroke-width="1"/><line x1="2" y1="10" x2="11" y2="10" stroke="#fff" stroke-width="0.8"/><rect x="5" y="8" width="3" height="3" fill="#111"/></svg>
<div class="t" style="left:40px;top:402px;letter-spacing:-0.3px">AAA/Local Users</div>
<div class="doth" style="left:10px;top:424px;width:11px"></div>
<div class="exp p" style="left:5px;top:420px"></div>
<svg style="left:20px;top:416px;" width="17" height="17" viewBox="0 0 17 17"><path d="M4,8 V5 a4.5,4.5 0 0 1 9,0 V8" fill="none" stroke="#111" stroke-width="1.6"/><rect x="1" y="8" width="15" height="8" fill="#f0e040" stroke="#111" stroke-width="1"/><rect x="6" y="10" width="2" height="4" fill="#111"/></svg>
<div class="t" style="left:40px;top:418px;letter-spacing:-0.23px">Secure Desktop Manager</div>
<div class="doth" style="left:10px;top:440px;width:11px"></div>
<div class="exp p" style="left:5px;top:436px"></div>
<svg style="left:20px;top:432px;" width="17" height="17" viewBox="0 0 17 17"><rect x="0.5" y="1.5" width="14" height="13" fill="#fff" stroke="#223" stroke-width="1"/><rect x="1" y="2" width="13" height="2" fill="#6a8ad0"/><circle cx="5" cy="8" r="2" fill="#e04040"/><line x1="8" y1="8" x2="13" y2="8" stroke="#1a4ab0" stroke-width="1.2"/><line x1="3" y1="12" x2="13" y2="12" stroke="#1a4ab0" stroke-width="1.2"/></svg>
<div class="t" style="left:40px;top:434px;letter-spacing:-0.06px">Certificate Management</div>
<div class="doth" style="left:10px;top:456px;width:11px"></div>
<svg style="left:20px;top:448px;" width="17" height="17" viewBox="0 0 17 17"><rect x="1.5" y="2.5" width="13" height="12" fill="#fff" stroke="#1a2a6a" stroke-width="1.4"/><rect x="2" y="3" width="12" height="2" fill="#4a6ad0"/><rect x="4" y="7" width="2" height="2" fill="#e02020"/><rect x="7" y="7" width="2" height="2" fill="#20a020"/><rect x="10" y="7" width="2" height="2" fill="#e02020"/><rect x="4" y="10" width="2" height="2" fill="#2040e0"/><rect x="7" y="10" width="2" height="2" fill="#e0a020"/><rect x="0" y="0" width="2" height="3" fill="#f0c020"/><polygon points="15.60,12.50 15.51,13.30 14.34,13.62 14.03,14.12 14.24,15.31 13.56,15.74 12.58,15.03 12.00,15.09 11.20,16.01 10.44,15.74 10.38,14.53 9.97,14.12 8.76,14.06 8.49,13.30 9.41,12.50 9.47,11.92 8.76,10.94 9.19,10.26 10.38,10.47 10.88,10.16 11.20,8.99 12.00,8.90 12.58,9.97 13.12,10.16 14.24,9.69 14.81,10.26 14.34,11.38 14.53,11.92" fill="#f3e27a" stroke="#333" stroke-width="0.7"/><circle cx="12" cy="12.5" r="1.08" fill="#fff" stroke="#444" stroke-width="0.6"/></svg>
<div class="t" style="left:40px;top:450px;letter-spacing:-0.25px">Language Localization</div>
<div class="doth" style="left:10px;top:472px;width:11px"></div>
<svg style="left:20px;top:464px;" width="17" height="17" viewBox="0 0 17 17"><path d="M3,6 L10,1 L15,3 L8,8z" fill="#c89060" stroke="#333" stroke-width="0.8"/><text x="0" y="16" font-family="Liberation Sans" font-weight="bold" font-size="12" fill="#1a6ae8">IP</text></svg>
<div class="t" style="left:40px;top:466px;letter-spacing:-0.44px">DHCP Server</div>
<div class="doth" style="left:10px;top:488px;width:11px"></div>
<svg style="left:20px;top:480px;" width="17" height="17" viewBox="0 0 17 17"><rect x="5" y="0.5" width="9" height="8" fill="#e8e8e8" stroke="#111" stroke-width="1"/><rect x="7" y="2" width="5" height="5" fill="#1020c0"/><rect x="4" y="9" width="11" height="3" fill="#f4f4f4" stroke="#111" stroke-width="0.8"/><text x="0" y="17" font-family="Liberation Sans" font-weight="bold" font-size="7" fill="#1a3ab0">DNS</text></svg>
<div class="t" style="left:40px;top:482px;letter-spacing:-0.6px">DNS</div>
<div class="doth" style="left:10px;top:504px;width:11px"></div>
<div class="exp p" style="left:5px;top:500px"></div>
<svg style="left:20px;top:496px;" width="17" height="17" viewBox="0 0 17 17"><rect x="1.5" y="2.5" width="13" height="12" fill="#fff" stroke="#1a2a6a" stroke-width="1.4"/><rect x="2" y="3" width="12" height="2" fill="#4a6ad0"/><rect x="4" y="7" width="2" height="2" fill="#e02020"/><rect x="7" y="7" width="2" height="2" fill="#20a020"/><rect x="10" y="7" width="2" height="2" fill="#e02020"/><rect x="4" y="10" width="2" height="2" fill="#2040e0"/><rect x="7" y="10" width="2" height="2" fill="#e0a020"/><rect x="0" y="0" width="2" height="3" fill="#f0c020"/><polygon points="15.60,12.50 15.51,13.30 14.34,13.62 14.03,14.12 14.24,15.31 13.56,15.74 12.58,15.03 12.00,15.09 11.20,16.01 10.44,15.74 10.38,14.53 9.97,14.12 8.76,14.06 8.49,13.30 9.41,12.50 9.47,11.92 8.76,10.94 9.19,10.26 10.38,10.47 10.88,10.16 11.20,8.99 12.00,8.90 12.58,9.97 13.12,10.16 14.24,9.69 14.81,10.26 14.34,11.38 14.53,11.92" fill="#f3e27a" stroke="#333" stroke-width="0.7"/><circle cx="12" cy="12.5" r="1.08" fill="#fff" stroke="#444" stroke-width="0.6"/></svg>
<div class="t" style="left:40px;top:498px;letter-spacing:-0.13px">Advanced</div>
</div>
<div class="a" style="left:250px;top:255px;width:16px;height:504px;background:#f0f0f0"></div>
<div class="a" style="left:250px;top:272px;width:16px;height:461px;background:#cdcdcd"></div>
<svg style="left:253px;top:261px;" width="9" height="6" viewBox="0 0 9 6"><path d="M1,5 L4.5,1.5 L8,5" fill="none" stroke="#3f4f4f" stroke-width="1.6"/></svg>
<svg style="left:253px;top:747px;" width="9" height="6" viewBox="0 0 9 6"><path d="M1,1 L4.5,4.5 L8,1" fill="none" stroke="#3f4f4f" stroke-width="1.6"/></svg>
<div class="a" style="left:3px;top:759px;width:263px;height:15px;background:#f0f0f0"></div>
<div class="a" style="left:21px;top:759px;width:184px;height:15px;background:#cdcdcd"></div>
<svg style="left:9px;top:762px;" width="6" height="9" viewBox="0 0 6 9"><path d="M5,1 L1.5,4.5 L5,8" fill="none" stroke="#3f4f4f" stroke-width="1.6"/></svg>
<svg style="left:238px;top:762px;" width="6" height="9" viewBox="0 0 6 9"><path d="M1,1 L4.5,4.5 L1,8" fill="none" stroke="#3f4f4f" stroke-width="1.6"/></svg>
<div class="red" style="left:14px;top:265px;width:141px;height:21px"></div>
<div class="red" style="left:19px;top:414px;width:108px;height:17px"></div>
<div class="red" style="left:38px;top:448px;width:80px;height:15px"></div>
<div class="red" style="left:88px;top:463px;width:79px;height:18px"></div>
<div class="a" style="left:2px;top:776px;width:266px;height:7px;background:linear-gradient(#a4a4a4,#969696 50%,#7c8086)"></div>
<div class="a" style="left:119px;top:779px;width:2px;height:2px;background:#f4f4f4"></div>
<div class="a" style="left:123px;top:779px;width:2px;height:2px;background:#f4f4f4"></div>
<div class="a" style="left:127px;top:779px;width:2px;height:2px;background:#f4f4f4"></div>
<div class="a" style="left:131px;top:779px;width:2px;height:2px;background:#f4f4f4"></div>
<div class="a" style="left:135px;top:779px;width:2px;height:2px;background:#f4f4f4"></div>
<div class="a" style="left:139px;top:779px;width:2px;height:2px;background:#f4f4f4"></div>
<div class="a" style="left:143px;top:779px;width:2px;height:2px;background:#f4f4f4"></div>
<div class="a" style="left:147px;top:779px;width:2px;height:2px;background:#f4f4f4"></div>
<div class="a" style="left:151px;top:779px;width:2px;height:2px;background:#f4f4f4"></div>
<div class="a" style="left:3px;top:783px;width:263px;height:30px;background:linear-gradient(#ffffff,#f7f7f7 55%,#e6e6e6)"></div>
<div class="a" style="left:3px;top:813px;width:263px;height:1px;background:#a0a0a0"></div>
<div class="t" style="left:36px;top:792px;font-size:11px;letter-spacing:-0.15px"><u>D</u>evice Setup</div>
<div class="a" style="left:3px;top:814px;width:263px;height:30px;background:linear-gradient(#ffffff,#f7f7f7 55%,#e6e6e6)"></div>
<div class="a" style="left:3px;top:844px;width:263px;height:1px;background:#a0a0a0"></div>
<div class="t" style="left:36px;top:823px;font-size:11px;letter-spacing:-0.15px">F<u>i</u>rewall</div>
<div class="a" style="left:3px;top:845px;width:263px;height:30px;background:linear-gradient(#fdcc8c,#fcbf79 50%,#fba95b);border-top:1px solid #b8b0a8"></div>
<div class="a" style="left:3px;top:875px;width:263px;height:1px;background:#a0a0a0"></div>
<div class="t" style="left:36px;top:854px;font-size:11px;letter-spacing:-0.15px"><u>R</u>emote Access VPN</div>
<div class="a" style="left:3px;top:876px;width:263px;height:30px;background:linear-gradient(#ffffff,#f7f7f7 55%,#e6e6e6)"></div>
<div class="a" style="left:3px;top:906px;width:263px;height:1px;background:#a0a0a0"></div>
<div class="t" style="left:36px;top:885px;font-size:11px;letter-spacing:-0.15px"><u>S</u>ite-to-Site VPN</div>
<div class="a" style="left:3px;top:907px;width:263px;height:30px;background:linear-gradient(#ffffff,#f7f7f7 55%,#e6e6e6)"></div>
<div class="a" style="left:3px;top:937px;width:263px;height:1px;background:#a0a0a0"></div>
<div class="t" style="left:36px;top:916px;font-size:11px;letter-spacing:-0.15px">Device <u>M</u>anagement</div>
<svg style="left:9px;top:785px;" width="27" height="27" viewBox="0 0 27 27"><path d="M9,20 C9,10 19,9 20,16 L20,20z" fill="#b0a0a0" stroke="#444" stroke-width="0.8"/><path d="M17,11 C21,12 22,17 18,21" fill="none" stroke="#a03010" stroke-width="1.4"/><circle cx="13.5" cy="6" r="4.2" fill="#f0b080" stroke="#222" stroke-width="1"/><path d="M9.5,5 C9,1 17,0 17.8,5 C16,3.5 12,3.5 9.5,5z" fill="#223344"/><rect x="1" y="12" width="11" height="10" fill="#2a9af0" stroke="#0a3a8a" stroke-width="0.9"/><rect x="10" y="12" width="2.5" height="10" fill="#1a5ab0"/><circle cx="6" cy="16.5" r="2.6" fill="none" stroke="#fff" stroke-width="1.3"/><rect x="1" y="22" width="11" height="3" fill="#b01828"/><polygon points="23.90,22.00 23.82,22.86 22.43,23.21 22.13,23.76 22.61,25.11 21.94,25.66 20.71,24.93 20.12,25.11 19.50,26.40 18.64,26.32 18.29,24.93 17.74,24.63 16.39,25.11 15.84,24.44 16.57,23.21 16.39,22.62 15.10,22.00 15.18,21.14 16.57,20.79 16.87,20.24 16.39,18.89 17.06,18.34 18.29,19.07 18.88,18.89 19.50,17.60 20.36,17.68 20.71,19.07 21.26,19.37 22.61,18.89 23.16,19.56 22.43,20.79 22.61,21.38" fill="#f8e060" stroke="#000" stroke-width="1.0"/><circle cx="19.5" cy="22" r="1.32" fill="#fff" stroke="#444" stroke-width="0.6"/></svg>
<svg style="left:9px;top:816px;" width="27" height="27" viewBox="0 0 27 27"><path d="M1,8 L11,3 L17,5 L17,22 L7,26 L1,23z" fill="#c02830" stroke="#000" stroke-width="1.2"/><path d="M11,3 V21 L17,22 M11,21 L7,26 M7,9 V26 M1,8 L7,9 L17,5" fill="none" stroke="#000" stroke-width="0.9"/><path d="M1.5,13 L7,14 L11,12 L17,10 M1.5,18 L7,19 L11,17 L17,15 M4,9 V24 M9,7 V25 M14,4.5 V21" stroke="#f0b0b0" stroke-width="0.9"/><path d="M13.5,11.5 H20 L22.5,14 V24 H13.5z" fill="#fff" stroke="#445" stroke-width="0.9"/><path d="M15,15 H18 M15,17.5 H18 M15,20 H18" stroke="#334" stroke-width="1"/><polygon points="24.40,23.00 24.32,23.86 22.93,24.21 22.63,24.76 23.11,26.11 22.44,26.66 21.21,25.93 20.62,26.11 20.00,27.40 19.14,27.32 18.79,25.93 18.24,25.63 16.89,26.11 16.34,25.44 17.07,24.21 16.89,23.62 15.60,23.00 15.68,22.14 17.07,21.79 17.37,21.24 16.89,19.89 17.56,19.34 18.79,20.07 19.38,19.89 20.00,18.60 20.86,18.68 21.21,20.07 21.76,20.37 23.11,19.89 23.66,20.56 22.93,21.79 23.11,22.38" fill="#f8e060" stroke="#000" stroke-width="1.0"/><circle cx="20" cy="23" r="1.32" fill="#fff" stroke="#444" stroke-width="0.6"/></svg>
<svg style="left:9px;top:847px;" width="27" height="27" viewBox="0 0 27 27"><path d="M3,12 C0,11 1,6 5,7 C6,2 13,2 14,6 C18,5 19,10 16,11.5z" fill="#c8e8f8" stroke="#111" stroke-width="1.1"/><path d="M15,5 C14,1.5 19,0.5 20,3 C23,2.5 24,6 22,7z" fill="#50b0f0" stroke="#0a3a8a" stroke-width="0.9"/><rect x="1" y="12" width="11" height="10" fill="#2a9af0" stroke="#0a3a8a" stroke-width="0.9"/><rect x="10" y="12" width="2.5" height="10" fill="#1a5ab0"/><circle cx="6" cy="16.5" r="2.6" fill="none" stroke="#fff" stroke-width="1.3"/><rect x="1" y="22" width="11" height="3" fill="#b01828"/><path d="M13,14 V10.5 a3.5,3.5 0 0 1 7,0 V14" fill="none" stroke="#000" stroke-width="1.6"/><rect x="11.5" y="13.5" width="10" height="8.5" fill="#f8e030" stroke="#000" stroke-width="1"/><path d="M13.5,16.5 H16 M13.5,19 H16" stroke="#a08000" stroke-width="1"/><polygon points="24.40,22.50 24.32,23.36 22.93,23.71 22.63,24.26 23.11,25.61 22.44,26.16 21.21,25.43 20.62,25.61 20.00,26.90 19.14,26.82 18.79,25.43 18.24,25.13 16.89,25.61 16.34,24.94 17.07,23.71 16.89,23.12 15.60,22.50 15.68,21.64 17.07,21.29 17.37,20.74 16.89,19.39 17.56,18.84 18.79,19.57 19.38,19.39 20.00,18.10 20.86,18.18 21.21,19.57 21.76,19.87 23.11,19.39 23.66,20.06 22.93,21.29 23.11,21.88" fill="#f8e060" stroke="#000" stroke-width="1.0"/><circle cx="20" cy="22.5" r="1.32" fill="#fff" stroke="#444" stroke-width="0.6"/></svg>
<svg style="left:9px;top:878px;" width="27" height="27" viewBox="0 0 27 27"><path d="M3,12 C0,11 1,6 5,7 C6,2 13,2 14,6 C18,5 19,10 16,11.5z" fill="#c8e8f8" stroke="#111" stroke-width="1.1"/><path d="M15,5 C14,1.5 19,0.5 20,3 C23,2.5 24,6 22,7z" fill="#50b0f0" stroke="#0a3a8a" stroke-width="0.9"/><rect x="1" y="12" width="11" height="10" fill="#2a9af0" stroke="#0a3a8a" stroke-width="0.9"/><rect x="10" y="12" width="2.5" height="10" fill="#1a5ab0"/><circle cx="6" cy="16.5" r="2.6" fill="none" stroke="#fff" stroke-width="1.3"/><rect x="1" y="22" width="11" height="3" fill="#b01828"/><path d="M13,14 V10.5 a3.5,3.5 0 0 1 7,0 V14" fill="none" stroke="#000" stroke-width="1.6"/><rect x="11.5" y="13.5" width="10" height="8.5" fill="#f8e030" stroke="#000" stroke-width="1"/><path d="M13.5,16.5 H16 M13.5,19 H16" stroke="#a08000" stroke-width="1"/><polygon points="24.40,22.50 24.32,23.36 22.93,23.71 22.63,24.26 23.11,25.61 22.44,26.16 21.21,25.43 20.62,25.61 20.00,26.90 19.14,26.82 18.79,25.43 18.24,25.13 16.89,25.61 16.34,24.94 17.07,23.71 16.89,23.12 15.60,22.50 15.68,21.64 17.07,21.29 17.37,20.74 16.89,19.39 17.56,18.84 18.79,19.57 19.38,19.39 20.00,18.10 20.86,18.18 21.21,19.57 21.76,19.87 23.11,19.39 23.66,20.06 22.93,21.29 23.11,21.88" fill="#f8e060" stroke="#000" stroke-width="1.0"/><circle cx="20" cy="22.5" r="1.32" fill="#fff" stroke="#444" stroke-width="0.6"/></svg>
<svg style="left:9px;top:909px;" width="27" height="27" viewBox="0 0 27 27"><polygon points="2.5,4.5 21,1 21,21 3,25.5" fill="#f4f6fa" stroke="#111" stroke-width="1.4"/><polygon points="3,4.5 20.5,1.5 20.5,4 3,7.5" fill="#1a2a8a"/><path d="M5,12 l2,2 l3,-4 M5,18 l2,2 l3,-4" fill="none" stroke="#000" stroke-width="1.3"/><path d="M12,11 H18 M12,14 H18 M12,17 H18" stroke="#9aa" stroke-width="0.9"/><polygon points="24.90,22.50 24.82,23.36 23.43,23.71 23.13,24.26 23.61,25.61 22.94,26.16 21.71,25.43 21.12,25.61 20.50,26.90 19.64,26.82 19.29,25.43 18.74,25.13 17.39,25.61 16.84,24.94 17.57,23.71 17.39,23.12 16.10,22.50 16.18,21.64 17.57,21.29 17.87,20.74 17.39,19.39 18.06,18.84 19.29,19.57 19.88,19.39 20.50,18.10 21.36,18.18 21.71,19.57 22.26,19.87 23.61,19.39 24.16,20.06 23.43,21.29 23.61,21.88" fill="#f8e060" stroke="#000" stroke-width="1.0"/><circle cx="20.5" cy="22.5" r="1.32" fill="#fff" stroke="#444" stroke-width="0.6"/></svg>
<div class="red" style="left:17px;top:846px;width:200px;height:34px"></div>
<div class="a" style="left:3px;top:938px;width:264px;height:17px;background:linear-gradient(#fdfdfd,#f2f2f2)"></div>
<svg style="left:259px;top:946px;" width="8" height="7" viewBox="0 0 8 7"><path d="M0.5,0.5 L3.5,3.5 L0.5,6.5 M4,0.5 L7,3.5 L4,6.5" fill="none" stroke="#000" stroke-width="1.3"/></svg>
<div class="a" style="left:266px;top:783px;width:1px;height:172px;background:#a0a0a0"></div>
<div class="a" style="left:2px;top:783px;width:1px;height:172px;background:#c8c8c8"></div>
<div class="a" style="left:275px;top:38px;width:1px;height:917px;background:#9a9ea4"></div>
<div class="a" style="left:276px;top:38px;width:2px;height:917px;background:#fca953"></div>
<div class="a" style="left:278px;top:59px;width:1px;height:896px;background:#f4f6fa"></div>
<div class="a" style="left:275px;top:38px;width:966px;height:1px;background:#9a9ea4"></div>
<div class="a" style="left:276px;top:39px;width:965px;height:20px;background:linear-gradient(#fca94f 0,#fca94f 2px,#fdd38c 3px,#fdcd84 6px,#fcc077 12px,#fca955 20px)"></div>
<div class="a" style="left:279px;top:59px;width:962px;height:1px;background:#eef0f4"></div>
<div class="t" style="left:288px;top:44px;font-weight:bold;color:#1010e8;letter-spacing:0.44px"><u>Configuration &gt; Remote Access VPN &gt; Network (Client) Access</u> &gt; <u>Advanced</u> &gt; <u>IPsec</u> &gt; <u>Crypto Maps</u></div>
<svg style="left:294px;top:68px;" width="11" height="11" viewBox="0 0 11 11"><path d="M4,0.5 h3 v3.5 h3.5 v3 h-3.5 v3.5 h-3 v-3.5 h-3.5 v-3 h3.5z" fill="#22cc22" stroke="#111" stroke-width="1"/></svg>
<div class="t" style="left:310px;top:70px;">Add</div>
<svg style="left:335px;top:75px;" width="6" height="4" viewBox="0 0 6 4"><path d="M0,0 H6 L3,3z" fill="#222"/></svg>
<div class="a" style="left:344px;top:66px;width:54px;height:21px;background:linear-gradient(#fcdcaa,#fbc88a 50%,#f9b067);border:1px solid #b0a090"></div>
<div class="a" style="left:386px;top:67px;width:11px;height:19px;background:linear-gradient(#fdecc8,#fbd8a0);border-left:1px solid #d0b080"></div>
<svg style="left:389px;top:75px;" width="6" height="4" viewBox="0 0 6 4"><path d="M0,0 H6 L3,3z" fill="#222"/></svg>
<svg style="left:348px;top:68px;" width="15" height="14" viewBox="0 0 15 14"><rect x="0.5" y="3.5" width="10" height="10" fill="#fff" stroke="#1a3a7a" stroke-width="1.2"/><path d="M4,10 L12,1.5 L14,3.5 L6,11.5 L3.5,12z" fill="#f0c030" stroke="#333" stroke-width="0.9"/></svg>
<div class="t" style="left:366px;top:70px;">Edit</div>
<div class="red" style="left:338px;top:62px;width:65px;height:31px"></div>
<svg style="left:403px;top:67px;" width="13" height="15" viewBox="0 0 13 15"><path d="M2,5 V15 H11.5 V5z" fill="#7ab0e8" stroke="#000" stroke-width="1.3"/><path d="M4.5,6 V14" stroke="#fff" stroke-width="1.2"/><path d="M8.5,6 V14" stroke="#3a6ab0" stroke-width="1.4"/><rect x="1" y="3" width="11.5" height="2.2" rx="1" fill="#9ac8f0" stroke="#000" stroke-width="1.1"/><path d="M5,3 V1.5 H8.5 V3" fill="none" stroke="#000" stroke-width="1.1"/></svg>
<div class="t" style="left:421px;top:70px;">Delete</div>
<div class="a" style="left:458px;top:67px;width:1px;height:19px;background:#a8a8a8"></div>
<div class="a" style="left:508px;top:67px;width:1px;height:19px;background:#a8a8a8"></div>
<div class="a" style="left:592px;top:67px;width:1px;height:19px;background:#a8a8a8"></div>
<svg style="left:467px;top:69px;" width="12" height="13" viewBox="0 0 12 13"><path d="M6,0.5 L11.5,6 H8 V12.5 H4 V6 H0.5z" fill="#a8a8a8"/></svg>
<svg style="left:489px;top:69px;" width="12" height="13" viewBox="0 0 12 13"><path d="M6,12.5 L0.5,7 H4 V0.5 H8 V7 H11.5z" fill="#a8a8a8"/></svg>
<svg style="left:516px;top:68px;" width="12" height="14" viewBox="0 0 12 14"><path d="M2,0 L9,10 M10,0 L3,10" stroke="#222" stroke-width="1.2"/><circle cx="3" cy="11.5" r="2" fill="none" stroke="#1a2ab0" stroke-width="1.4"/><circle cx="9" cy="11.5" r="2" fill="none" stroke="#1a2ab0" stroke-width="1.4"/></svg>
<svg style="left:537px;top:68px;" width="16" height="14" viewBox="0 0 16 14"><rect x="0.5" y="0.5" width="9" height="10" fill="#fff" stroke="#1a2a8a" stroke-width="1"/><rect x="5.5" y="3.5" width="9" height="10" fill="#fff" stroke="#1a2a8a" stroke-width="1"/><path d="M7,7 H13 M7,9 H13 M7,11 H13" stroke="#4a6ad0" stroke-width="0.8"/></svg>
<svg style="left:559px;top:68px;" width="17" height="14" viewBox="0 0 17 14"><rect x="0.5" y="2.5" width="11" height="11" fill="#a8a8a8" stroke="#909090" stroke-width="1"/><rect x="3" y="0.5" width="6" height="3" fill="#b8b8b8" stroke="#909090"/><rect x="6.5" y="6.5" width="9" height="7" fill="#c0c0c0" stroke="#909090" stroke-width="1"/></svg>
<svg style="left:580px;top:75px;" width="6" height="4" viewBox="0 0 6 4"><path d="M0,0 H6 L3,3z" fill="#a8a8a8"/></svg>
<svg style="left:600px;top:69px;" width="14" height="14" viewBox="0 0 14 14"><circle cx="5.5" cy="5.5" r="4.2" fill="#e8f4ff" stroke="#222" stroke-width="1.4"/><path d="M8.5,8.5 L13,13" stroke="#222" stroke-width="2.4"/></svg>
<div class="t" style="left:618px;top:70px;">Find</div>
<svg style="left:645px;top:68px;" width="16" height="14" viewBox="0 0 16 14"><rect x="0.5" y="0.5" width="15" height="13" fill="#fff" stroke="#111" stroke-width="1.2"/><rect x="2" y="3" width="4" height="3" fill="#3a7ad0"/><rect x="9" y="3" width="4" height="3" fill="#3a7ad0"/><path d="M6,4.5 H9 M4,6 V9 H11" stroke="#222" stroke-width="0.8"/><rect x="2" y="10" width="11" height="1.5" fill="#e04040"/></svg>
<div class="t" style="left:664px;top:70px;">Diagram</div>
<div class="a" style="left:287px;top:90px;width:954px;height:795px;background:#fff;border:1px solid #828790;border-right:none"></div>
<div class="a" style="left:407px;top:91px;width:1px;height:50px;background:#e3e3e3"></div>
<div class="a" style="left:772px;top:91px;width:1px;height:50px;background:#e3e3e3"></div>
<div class="a" style="left:860px;top:91px;width:1px;height:50px;background:#e3e3e3"></div>
<div class="a" style="left:940px;top:91px;width:1px;height:50px;background:#e3e3e3"></div>
<div class="a" style="left:980px;top:91px;width:1px;height:50px;background:#e3e3e3"></div>
<div class="a" style="left:1100px;top:91px;width:1px;height:50px;background:#e3e3e3"></div>
<div class="a" style="left:1233px;top:91px;width:1px;height:50px;background:#e3e3e3"></div>
<div class="a" style="left:437px;top:116px;width:1px;height:25px;background:#e3e3e3"></div>
<div class="a" style="left:537px;top:116px;width:1px;height:25px;background:#e3e3e3"></div>
<div class="a" style="left:637px;top:116px;width:1px;height:25px;background:#e3e3e3"></div>
<div class="a" style="left:692px;top:116px;width:1px;height:25px;background:#e3e3e3"></div>
<div class="a" style="left:407px;top:115px;width:365px;height:1px;background:#e3e3e3"></div>
<div class="a" style="left:288px;top:140px;width:953px;height:1px;background:#e3e3e3"></div>
<div class="t" style="left:292px;top:110px;">Type:Priority</div>
<div class="t" style="left:412px;top:98px;">Traffic Selection</div>
<div class="t" style="left:413px;top:123px;">#</div>
<div class="t" style="left:442px;top:123px;">Source</div>
<div class="t" style="left:542px;top:123px;">Destination</div>
<div class="t" style="left:642px;top:123px;">Service</div>
<div class="t" style="left:697px;top:123px;">Action</div>
<div class="t" style="left:777px;top:110px;">Transform Set</div>
<div class="t" style="left:865px;top:110px;">Peer</div>
<div class="t" style="left:945px;top:110px;">PFS</div>
<div class="t" style="left:985px;top:110px;">NAT-T Enabled</div>
<div class="t" style="left:1105px;top:110px;">Reverse Route Enabled</div>
<div class="t" style="left:1238px;top:110px;">C</div>
<div class="a" style="left:288px;top:141px;width:953px;height:17px;background:#fffee6"></div>
<div class="exp" style="left:291px;top:145px;border-color:#808080"></div>
<div class="t" style="left:305px;top:143px;">interface: outside</div>
<div class="a" style="left:288px;top:158px;width:953px;height:142px;background:#0078d7"></div>
<div class="a" style="left:407px;top:158px;width:1px;height:142px;background:#fff"></div>
<div class="a" style="left:437px;top:158px;width:1px;height:142px;background:#fff"></div>
<div class="a" style="left:537px;top:158px;width:1px;height:142px;background:#fff"></div>
<div class="a" style="left:637px;top:158px;width:1px;height:142px;background:#fff"></div>
<div class="a" style="left:692px;top:158px;width:1px;height:142px;background:#fff"></div>
<div class="a" style="left:772px;top:158px;width:1px;height:142px;background:#fff"></div>
<div class="a" style="left:860px;top:158px;width:1px;height:142px;background:#fff"></div>
<div class="a" style="left:940px;top:158px;width:1px;height:142px;background:#fff"></div>
<div class="a" style="left:980px;top:158px;width:1px;height:142px;background:#fff"></div>
<div class="a" style="left:1100px;top:158px;width:1px;height:142px;background:#fff"></div>
<div class="a" style="left:1233px;top:158px;width:1px;height:142px;background:#fff"></div>
<div class="a" style="left:297px;top:159px;width:1px;height:14px;background:repeating-linear-gradient(#8ab8e8 0 1px,transparent 1px 2px)"></div>
<div class="t" style="left:307px;top:161px;color:#fff">dynamic: 65535.6...</div>
<div class="t" style="left:412px;top:161px;color:#fff">1</div>
<svg style="left:441px;top:161px;" width="15" height="13" viewBox="0 0 15 13"><path d="M1,6 C1,3 3,2 5,2.5 C6,0.5 9,0.3 10.5,2 C13,2 14,4 13.5,6 C14.5,8 13,10.5 11,10 C10,11.8 7,11.8 6,10.5 C3.5,11 1,9 1,6z" fill="#5a84e8" stroke="#0a10c0" stroke-width="1.2"/><path d="M2.5,6 C2.5,4 4,3.5 5.5,4 M6.5,3.5 C7,2 9,2 10,2.8 M4,7.5 L6,9.5 M6.5,6 L8,4.5" stroke="#fff" stroke-width="1.2" fill="none"/><circle cx="9" cy="7" r="0.7" fill="#e050f0"/><circle cx="11.5" cy="6" r="0.7" fill="#e050f0"/><circle cx="10" cy="9.5" r="0.7" fill="#e050f0"/></svg>
<div class="t" style="left:459px;top:161px;color:#fff">any</div>
<svg style="left:541px;top:161px;" width="15" height="13" viewBox="0 0 15 13"><path d="M1,6 C1,3 3,2 5,2.5 C6,0.5 9,0.3 10.5,2 C13,2 14,4 13.5,6 C14.5,8 13,10.5 11,10 C10,11.8 7,11.8 6,10.5 C3.5,11 1,9 1,6z" fill="#5a84e8" stroke="#0a10c0" stroke-width="1.2"/><path d="M2.5,6 C2.5,4 4,3.5 5.5,4 M6.5,3.5 C7,2 9,2 10,2.8 M4,7.5 L6,9.5 M6.5,6 L8,4.5" stroke="#fff" stroke-width="1.2" fill="none"/><circle cx="9" cy="7" r="0.7" fill="#e050f0"/><circle cx="11.5" cy="6" r="0.7" fill="#e050f0"/><circle cx="10" cy="9.5" r="0.7" fill="#e050f0"/></svg>
<div class="t" style="left:559px;top:161px;color:#fff">any</div>
<svg style="left:640px;top:163px;" width="16" height="9" viewBox="0 0 16 9"><path d="M0.5,0.5 H11.5 L15.5,4.5 L11.5,8.5 H0.5z" fill="#f8e41a" stroke="#a08000" stroke-width="0.8"/><text x="2.5" y="7" font-family="Liberation Mono" font-size="7" font-weight="bold" fill="#302000">IP</text></svg>
<div class="t" style="left:659px;top:161px;color:#fff">ip</div>
<svg style="left:697px;top:161px;" width="14" height="14" viewBox="0 0 14 14"><path d="M1,7.5 L4.5,11.5 L13,2" fill="none" stroke="#0a3a0a" stroke-width="3.4"/><path d="M1,7.5 L4.5,11.5 L13,2" fill="none" stroke="#5ad040" stroke-width="1.6"/></svg>
<div class="t" style="left:714px;top:161px;color:#fff">Protect</div>
<div class="a" style="left:773px;top:158px;width:87px;height:142px;overflow:hidden">
<div class="t" style="left:0px;top:2px;color:#fff;font-size:10.5px;letter-spacing:-0.35px">ESP-AES-128-SHA</div>
<div class="t" style="left:0px;top:16px;color:#fff;font-size:10.5px;letter-spacing:-0.35px">ESP-AES-128-MD5</div>
<div class="t" style="left:0px;top:30px;color:#fff;font-size:10.5px;letter-spacing:-0.35px">ESP-AES-192-SHA</div>
<div class="t" style="left:0px;top:44px;color:#fff;font-size:10.5px;letter-spacing:-0.35px">ESP-AES-192-MD5</div>
<div class="t" style="left:0px;top:58px;color:#fff;font-size:10.5px;letter-spacing:-0.35px">ESP-AES-256-SHA</div>
<div class="t" style="left:0px;top:72px;color:#fff;font-size:10.5px;letter-spacing:-0.35px">ESP-AES-256-MD5</div>
<div class="t" style="left:0px;top:86px;color:#fff;font-size:10.5px;letter-spacing:-0.35px">ESP-3DES-SHA</div>
<div class="t" style="left:0px;top:100px;color:#fff;font-size:10.5px;letter-spacing:-0.35px">ESP-3DES-MD5</div>
<div class="t" style="left:0px;top:114px;color:#fff;font-size:10.5px;letter-spacing:-0.35px">ESP-DES-SHA</div>
<div class="t" style="left:0px;top:128px;color:#fff;font-size:10.5px;letter-spacing:-0.35px">ESP-DES-MD5</div>
</div>
<div class="a" style="left:1034px;top:159px;width:13px;height:13px;background:#fff;border:1px solid #333"></div>
<svg style="left:1036px;top:161px;" width="9" height="9" viewBox="0 0 9 9"><path d="M1,4.5 L3.5,7 L8,1.5" fill="none" stroke="#222" stroke-width="1.1"/></svg>
<div class="a" style="left:1161px;top:159px;width:13px;height:13px;background:#fff;border:1px solid #333"></div>
<div class="a" style="left:288px;top:868px;width:953px;height:16px;background:#cdcdcd"></div>
<div class="a" style="left:288px;top:868px;width:17px;height:16px;background:#f0f0f0"></div>
<svg style="left:293px;top:872px;" width="6" height="9" viewBox="0 0 6 9"><path d="M5,1 L1.5,4.5 L5,8" fill="none" stroke="#3f4f4f" stroke-width="1.6"/></svg>
<div class="a" style="left:296px;top:898px;width:13px;height:13px;background:#fff;border:1px solid #333"></div>
<svg style="left:298px;top:900px;" width="9" height="9" viewBox="0 0 9 9"><path d="M0.5,4.5 L3.5,7.5 L8.5,1" fill="none" stroke="#222" stroke-width="1.2"/></svg>
<div class="t" style="left:312px;top:899px;letter-spacing:-0.1px">Enable Anti-replay window size:</div>
<div class="a" style="left:478px;top:895px;width:49px;height:21px;background:#e5e5e5;border:1px solid #adadad"></div>
<div class="t" style="left:484px;top:899px;">64</div>
<svg style="left:510px;top:902px;" width="10" height="6" viewBox="0 0 10 6"><path d="M1,1 L5,5 L9,1" fill="none" stroke="#333" stroke-width="1.1"/></svg>
<div class="a" style="left:610px;top:309px;width:631px;height:646px;background:#f0f0f0;border-left:1px solid #5f5f5f;border-top:1px solid #5f5f5f"></div>
<div class="a" style="left:611px;top:310px;width:630px;height:30px;background:#fff"></div>
<svg style="left:615px;top:312px;" width="24" height="24" viewBox="0 0 24 24"><polygon points="4.5,5.5 16.5,4 16.5,17.5 4.5,19.5" fill="#fff" stroke="#202020" stroke-width="1.2"/><polygon points="4.5,5.5 16.5,4 16.5,6 4.5,8.5" fill="#10108a"/><circle cx="7" cy="10.5" r="0.9" fill="#2040e0"/><circle cx="7" cy="13.5" r="0.9" fill="#2040e0"/><circle cx="7" cy="15.5" r="0.9" fill="#2040e0"/><circle cx="9.5" cy="10" r="0.9" fill="#30c030"/><circle cx="9.5" cy="12.5" r="0.9" fill="#30c030"/><circle cx="9.5" cy="14.5" r="0.9" fill="#30c030"/><rect x="10" y="9" width="10" height="7" fill="#7ad8f8" stroke="#0a6ad8" stroke-width="1"/><path d="M10.5,11.5 H12.5 M13.5,13.5 H16 M17,11.5 H19.5 M10.5,15 H19.5" stroke="#0a6ad8" stroke-width="1"/><rect x="10" y="16" width="10" height="4" fill="#e88080" stroke="#700010" stroke-width="1"/><circle cx="14.5" cy="8.5" r="0.9" fill="#f01010"/></svg>
<div class="t" style="left:640px;top:319px;font-size:12px;letter-spacing:-0.35px">Edit IPsec Rule</div>
<svg style="left:1236px;top:319px;" width="11" height="11" viewBox="0 0 11 11"><path d="M0.5,0.5 L10,10 M10,0.5 L0.5,10" stroke="#000" stroke-width="1.1"/></svg>
<div class="a" style="left:623px;top:375px;width:618px;height:580px;background:#f0f0f0;border-left:1px solid #d9d9d9"></div>
<div class="a" style="left:624px;top:373px;width:617px;height:3px;background:#fff"></div>
<div class="a" style="left:1082px;top:372px;width:159px;height:1px;background:#d9d9d9"></div>
<div class="a" style="left:799px;top:355px;width:197px;height:18px;background:#f0f0f0;border:1px solid #d9d9d9;border-bottom:1px solid #d9d9d9"></div>
<div class="a" style="left:995px;top:355px;width:87px;height:18px;background:#f0f0f0;border:1px solid #d9d9d9"></div>
<div class="a" style="left:623px;top:352px;width:176px;height:23px;background:#f0f0f0;border:1px solid #d9d9d9;border-bottom:none"></div>
<div class="a" style="left:625px;top:355px;width:171px;height:18px;border:1px dotted #222"></div>
<div class="t" style="left:630px;top:356px;letter-spacing:-0.2px">Tunnel Policy (Crypto Map) - Basic</div>
<div class="t" style="left:803px;top:358px;letter-spacing:-0.12px">Tunnel Policy (Crypto Map) - Advanced</div>
<div class="t" style="left:1001px;top:358px;letter-spacing:-0.1px">Traffic Selection</div>
<div class="t" style="left:657px;top:404px;letter-spacing:0.1px">Interface:</div>
<div class="t" style="left:719px;top:404px;">outside</div>
<div class="t" style="left:871px;top:404px;">Policy Type:</div>
<div class="t" style="left:949px;top:404px;">dynamic</div>
<div class="t" style="left:1089px;top:404px;">Priority:</div>
<div class="a" style="left:1146px;top:398px;width:51px;height:24px;background:#fff;border:1px solid #a5a5a5"></div>
<div class="t" style="left:1149px;top:404px;">65535</div>
<div class="a" style="left:652px;top:440px;width:556px;height:136px;border:1px solid #dcdcdc"></div>
<div class="t" style="left:654px;top:435px;background:#f0f0f0;letter-spacing:-0.15px">&nbsp;IPsec Proposals (Transform Sets)&nbsp;</div>
<div class="t" style="left:660px;top:462px;letter-spacing:-0.1px">Transform Set to Be Added:</div>
<div class="a" style="left:662px;top:494px;width:150px;height:24px;background:#e5e5e5;border:1px solid #adadad"></div>
<div class="t" style="left:665px;top:500px;letter-spacing:-0.82px">TRANS_ESP_3DES_SHA</div>
<svg style="left:796px;top:504px;" width="10" height="6" viewBox="0 0 10 6"><path d="M1,1 L5,5 L9,1" fill="none" stroke="#333" stroke-width="1.1"/></svg>
<div class="red" style="left:653px;top:481px;width:155px;height:45px"></div>
<div class="a" style="left:826px;top:475px;width:78px;height:26px;background:#e1e1e1;border:1px solid #adadad"></div>
<div class="t" style="left:826px;top:482px;width:78px;text-align:center">Add &gt;&gt;</div>
<div class="red" style="left:818px;top:464px;width:92px;height:39px"></div>
<div class="a" style="left:826px;top:515px;width:78px;height:26px;background:#cccccc;border:1px solid #bfbfbf"></div>
<div class="t" style="left:826px;top:522px;width:78px;text-align:center;color:#838383">Remove</div>
<div class="a" style="left:922px;top:454px;width:150px;height:110px;background:#fff;border:1px solid #828790"></div>
<div class="a" style="left:923px;top:455px;width:132px;height:108px;overflow:hidden">
<div class="t" style="left:1px;top:2px;letter-spacing:-0.55px">ESP-AES-128-SHA</div>
<div class="t" style="left:1px;top:18px;letter-spacing:-0.55px">ESP-AES-128-MD5</div>
<div class="t" style="left:1px;top:34px;letter-spacing:-0.55px">ESP-AES-192-SHA</div>
<div class="t" style="left:1px;top:50px;letter-spacing:-0.55px">ESP-AES-192-MD5</div>
<div class="t" style="left:1px;top:66px;letter-spacing:-0.55px">ESP-AES-256-SHA</div>
<div class="t" style="left:1px;top:82px;letter-spacing:-0.55px">ESP-AES-256-MD5</div>
<div class="t" style="left:1px;top:98px;letter-spacing:-0.55px">ESP-3DES-SHA</div>
</div>
<div class="a" style="left:1055px;top:455px;width:16px;height:108px;background:#f0f0f0"></div>
<div class="a" style="left:1055px;top:472px;width:16px;height:49px;background:#cdcdcd"></div>
<svg style="left:1059px;top:461px;" width="9" height="6" viewBox="0 0 9 6"><path d="M1,5 L4.5,1.5 L8,5" fill="none" stroke="#3f4f4f" stroke-width="1.6"/></svg>
<svg style="left:1059px;top:552px;" width="9" height="6" viewBox="0 0 9 6"><path d="M1,1 L4.5,4.5 L8,1" fill="none" stroke="#3f4f4f" stroke-width="1.6"/></svg>
<div class="a" style="left:1085px;top:475px;width:98px;height:22px;background:#cccccc;border:1px solid #bfbfbf"></div>
<div class="t" style="left:1085px;top:480px;width:98px;text-align:center;color:#838383">Move Up</div>
<div class="a" style="left:1085px;top:515px;width:98px;height:22px;background:#cccccc;border:1px solid #bfbfbf"></div>
<div class="t" style="left:1085px;top:520px;width:98px;text-align:center;color:#838383">Move Down</div>
<div class="a" style="left:652px;top:602px;width:556px;height:251px;border:1px solid #dcdcdc"></div>
<div class="t" style="left:654px;top:597px;background:#f0f0f0;letter-spacing:-0.12px">&nbsp;Peer Settings&nbsp;&nbsp;-&nbsp;&nbsp;Optional for Dynamic Crypto Map Entries&nbsp;</div>
<div class="t" style="left:659px;top:622px;letter-spacing:-0.1px">The Connection Type is applicable to static tunnel policies only. Uni-directional connection type policies are used</div>
<div class="t" style="left:659px;top:636px;letter-spacing:-0.1px">for LAN-to-LAN redundancy. Tunnel policies of the 'Originate Only' connection type may specify up to 10</div>
<div class="t" style="left:659px;top:650px;letter-spacing:-0.1px">redundant peers.</div>
<div class="t" style="left:659px;top:729px;letter-spacing:-0.1px">IP Address of Peer to Be Added:</div>
<div class="a" style="left:662px;top:761px;width:150px;height:24px;background:#fff;border:1px solid #a5a5a5"></div>
<div class="a" style="left:831px;top:747px;width:78px;height:26px;background:#cccccc;border:1px solid #bfbfbf"></div>
<div class="t" style="left:831px;top:754px;width:78px;text-align:center;color:#838383">Add &gt;&gt;</div>
<div class="a" style="left:831px;top:787px;width:78px;height:26px;background:#cccccc;border:1px solid #bfbfbf"></div>
<div class="t" style="left:831px;top:794px;width:78px;text-align:center;color:#838383">Remove</div>
<div class="a" style="left:925px;top:726px;width:150px;height:110px;background:#fff;border:1px solid #828790"></div>
<div class="a" style="left:1086px;top:747px;width:98px;height:22px;background:#cccccc;border:1px solid #bfbfbf"></div>
<div class="t" style="left:1086px;top:752px;width:98px;text-align:center;color:#838383">Move Up</div>
<div class="a" style="left:1086px;top:787px;width:98px;height:22px;background:#cccccc;border:1px solid #bfbfbf"></div>
<div class="t" style="left:1086px;top:792px;width:98px;text-align:center;color:#838383">Move Down</div>
<div class="a" style="left:654px;top:872px;width:13px;height:13px;background:#fff;border:1px solid #333"></div>
<div class="t" style="left:670px;top:872px;letter-spacing:-0.15px">Enable Perfect Forwarding Secrecy</div>
<div class="t" style="left:673px;top:898px;color:#6d6d6d;letter-spacing:-0.1px">Diffie-Hellman Group:</div>
<div class="a" style="left:804px;top:892px;width:90px;height:24px;background:#cccccc;border:1px solid #bfbfbf"></div>
<div class="a" style="left:806px;top:894px;width:68px;height:20px;background:#e8e8e8"></div>
<svg style="left:879px;top:901px;" width="10" height="6" viewBox="0 0 10 6"><path d="M1,1 L5,5 L9,1" fill="none" stroke="#a0a0a0" stroke-width="1.1"/></svg>
</body></html>
